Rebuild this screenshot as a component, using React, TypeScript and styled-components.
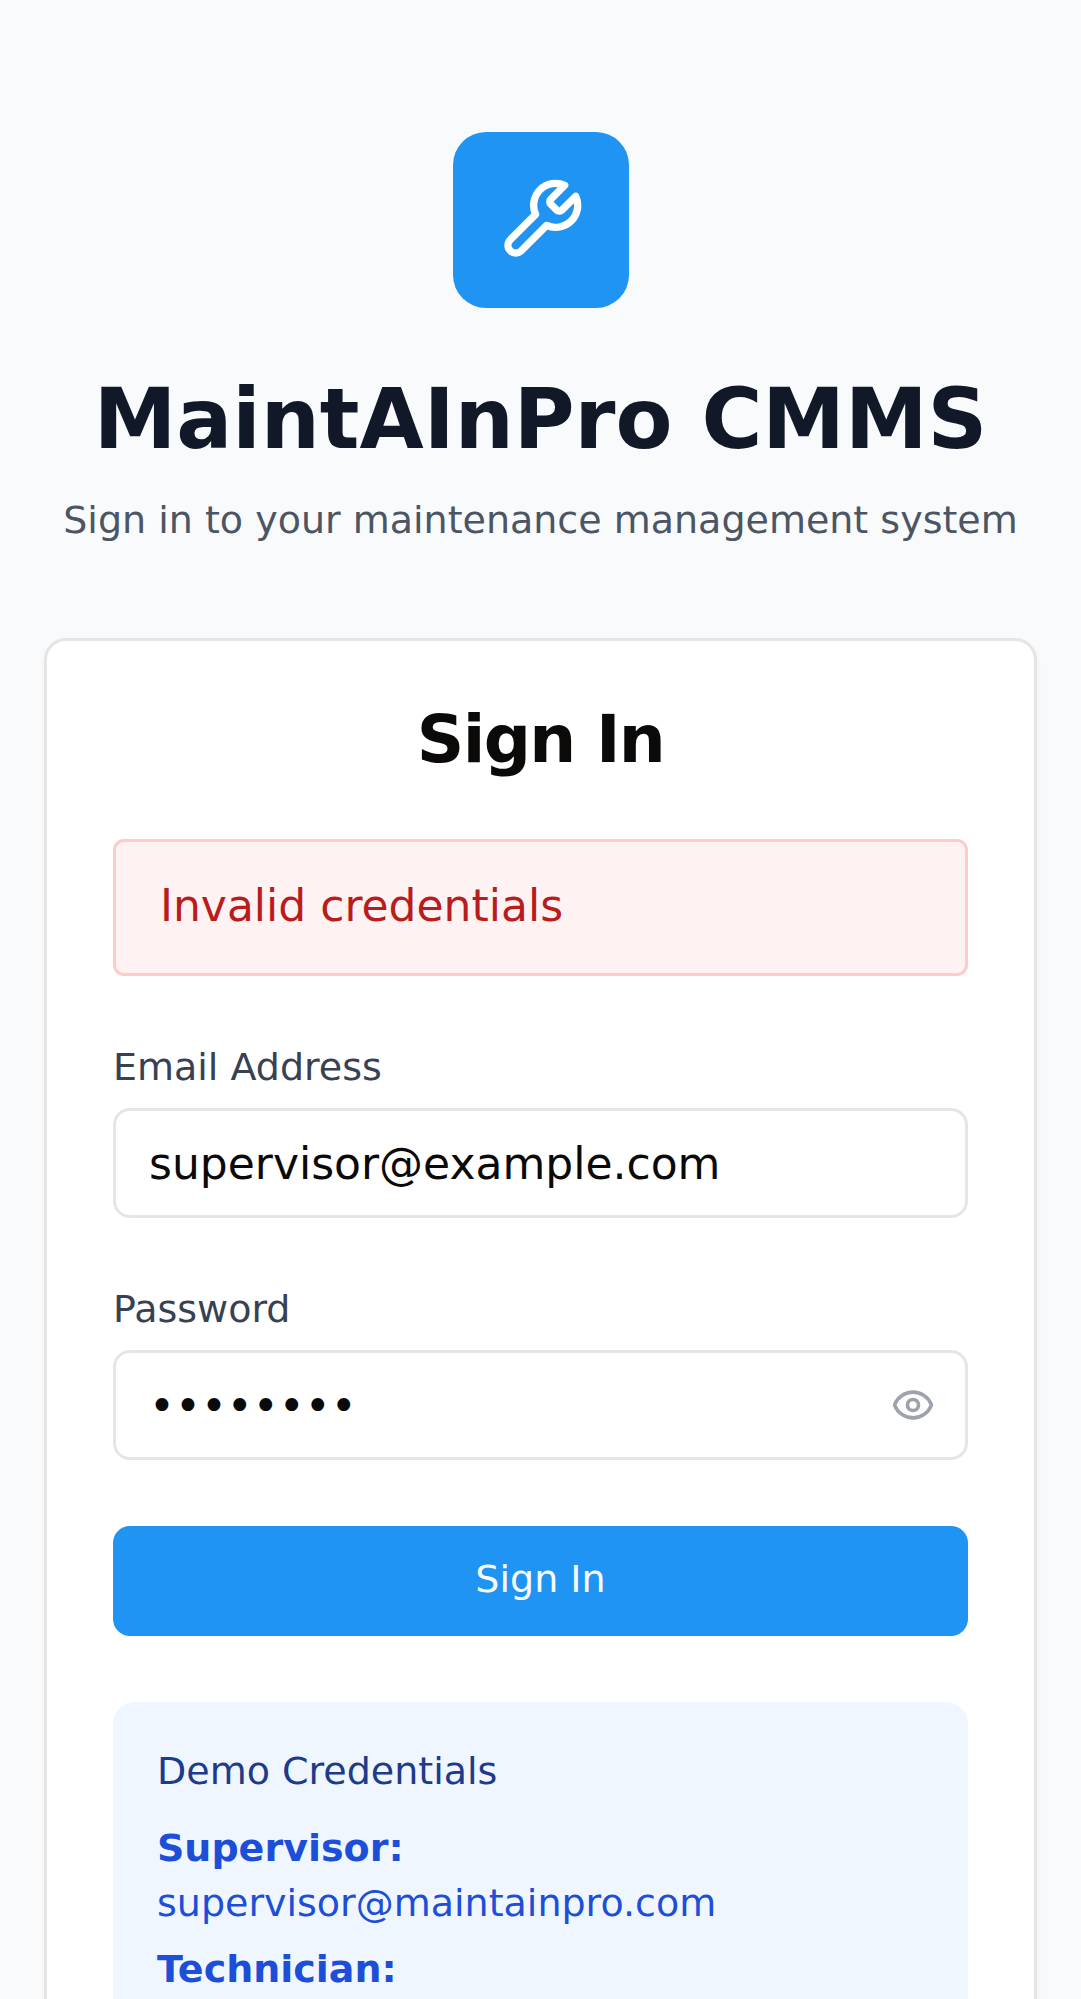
import { useState } from "react";
import type { SVGProps } from "react";
import styled, { createGlobalStyle } from "styled-components";

const GlobalStyle = createGlobalStyle`
  *, *::before, *::after { box-sizing: border-box; }
  body { margin: 0; background: #f9fafb; }
  body, input, button { font-family: "DejaVu Sans", sans-serif; }
`;

const Page = styled.main`
  height: 100vh;
  overflow: hidden auto;
  scrollbar-width: none;
  padding: 132px 44px;
  background: #f9fafb;
`;

const Header = styled.header`
  display: flex;
  flex-direction: column;
  align-items: center;
  text-align: center;
  margin-bottom: 90px;
`;

const LogoTile = styled.div`
  display: grid;
  place-items: center;
  width: 176px;
  height: 176px;
  margin-bottom: 62px;
  border-radius: 33px;
  background: #2094f3;
  color: #ffffff;
`;

const Title = styled.h1`
  margin: 0;
  font-size: 83px;
  line-height: 99px;
  font-weight: 700;
  color: #111827;
`;

const Subtitle = styled.p`
  margin: 24px 0 0;
  font-size: 38px;
  line-height: 55px;
  color: #4b5563;
`;

const Card = styled.section`
  padding: 66px;
  border: 3px solid #e7e5e4;
  border-radius: 22px;
  background: #ffffff;
  box-shadow: 0 3px 6px rgba(0, 0, 0, 0.05);
`;

const CardTitle = styled.h2`
  margin: 0 0 66px;
  font-size: 66px;
  line-height: 66px;
  font-weight: 700;
  letter-spacing: -0.025em;
  text-align: center;
  color: #0c0a09;
`;

const Form = styled.form`
  display: flex;
  flex-direction: column;
  gap: 66px;
`;

const Alert = styled.div`
  padding: 31px 44px 34px;
  border: 3px solid #fecaca;
  border-radius: 11px;
  background: #fef2f2;
  font-size: 44px;
  line-height: 66px;
  color: #b91c1c;
`;

const Field = styled.div`
  display: flex;
  flex-direction: column;
  gap: 15px;
`;

const Label = styled.label`
  font-size: 38px;
  line-height: 51px;
  color: #374151;
`;

const InputWrap = styled.div`
  position: relative;
  display: flex;
`;

const Input = styled.input<{ $withToggle?: boolean }>`
  flex: 1;
  min-width: 0;
  height: 110px;
  padding: 22px ${(p) => (p.$withToggle ? "110px" : "33px")} 22px 33px;
  border: 3px solid #e7e5e4;
  border-radius: 17px;
  outline: none;
  background: #ffffff;
  font-size: 44px;
  color: #0c0a09;
`;

const ToggleButton = styled.button`
  position: absolute;
  inset: 0 0 0 auto;
  display: flex;
  align-items: center;
  padding: 0 33px;
  border: 0;
  background: transparent;
  color: #9ca3af;
  cursor: pointer;
`;

const SubmitButton = styled.button`
  height: 110px;
  padding: 0 44px 4px;
  border: 0;
  border-radius: 17px;
  background: #2094f3;
  font-size: 38px;
  line-height: 55px;
  color: #f8fafc;
  cursor: pointer;
`;

const DemoPanel = styled.aside`
  margin-top: 66px;
  padding: 42px 44px;
  border-radius: 22px;
  background: #eff6ff;
  font-size: 38px;
  line-height: 55px;
`;

const DemoTitle = styled.h3`
  margin: 0 0 22px;
  font-size: 38px;
  font-weight: 400;
  color: #1e3a8a;
`;

const DemoList = styled.dl`
  display: flex;
  flex-direction: column;
  gap: 11px;
  margin: 0;
  color: #1d4ed8;
`;

const DemoRole = styled.dt`
  font-weight: 700;
`;

const DemoAccount = styled.dd`
  margin: 0;
`;

const stroke: SVGProps<SVGSVGElement> = {
  viewBox: "0 0 24 24",
  fill: "none",
  stroke: "currentColor",
  strokeWidth: 2,
  strokeLinecap: "round",
  strokeLinejoin: "round",
};

const WrenchIcon = () => (
  <svg width="88" height="88" aria-hidden="true" {...stroke}>
    <path d="M14.7 6.3a1 1 0 0 0 0 1.4l1.6 1.6a1 1 0 0 0 1.4 0l3.77-3.77a6 6 0 0 1-7.94 7.94l-6.91 6.91a2.12 2.12 0 0 1-3-3l6.91-6.91a6 6 0 0 1 7.94-7.94l-3.76 3.76z" />
  </svg>
);

const EyeIcon = () => (
  <svg width="44" height="44" aria-hidden="true" {...stroke}>
    <path d="M2.062 12.348a1 1 0 0 1 0-.696 10.75 10.75 0 0 1 19.876 0 1 1 0 0 1 0 .696 10.75 10.75 0 0 1-19.876 0" />
    <circle cx="12" cy="12" r="3" />
  </svg>
);

const accounts = [
  { role: "Supervisor:", email: "supervisor@maintainpro.com" },
  { role: "Technician:", email: "" },
];

export default function App() {
  const [email, setEmail] = useState("supervisor@example.com");
  const [password, setPassword] = useState("password");
  const [visible, setVisible] = useState(false);

  return (
    <>
      <GlobalStyle />
      <Page>
        <Header>
          <LogoTile>
            <WrenchIcon />
          </LogoTile>
          <Title>MaintAInPro CMMS</Title>
          <Subtitle>Sign in to your maintenance management system</Subtitle>
        </Header>
        <Card>
          <CardTitle>Sign In</CardTitle>
          <Form onSubmit={(e) => e.preventDefault()}>
            <Alert role="alert">Invalid credentials</Alert>
            <Field>
              <Label htmlFor="email">Email Address</Label>
              <InputWrap>
                <Input
                  id="email"
                  type="email"
                  value={email}
                  onChange={(e) => setEmail(e.target.value)}
                />
              </InputWrap>
            </Field>
            <Field>
              <Label htmlFor="password">Password</Label>
              <InputWrap>
                <Input
                  id="password"
                  type={visible ? "text" : "password"}
                  $withToggle
                  value={password}
                  onChange={(e) => setPassword(e.target.value)}
                />
                <ToggleButton
                  type="button"
                  aria-pressed={visible}
                  onClick={() => setVisible(!visible)}
                >
                  <EyeIcon />
                </ToggleButton>
              </InputWrap>
            </Field>
            <SubmitButton type="submit">Sign In</SubmitButton>
          </Form>
          <DemoPanel>
            <DemoTitle>Demo Credentials</DemoTitle>
            <DemoList>
              {accounts.map((account) => (
                <div key={account.role}>
                  <DemoRole>{account.role}</DemoRole>
                  {account.email && <DemoAccount>{account.email}</DemoAccount>}
                </div>
              ))}
            </DemoList>
          </DemoPanel>
        </Card>
      </Page>
    </>
  );
}
